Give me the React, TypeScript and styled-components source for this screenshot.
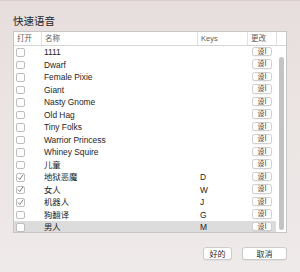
import { FC } from "react";
import styled, { createGlobalStyle } from "styled-components";

type VoiceRow = {
  name: string;
  key?: string;
  checked?: boolean;
  selected?: boolean;
};

const rows: VoiceRow[] = [
  { name: "1111" },
  { name: "Dwarf" },
  { name: "Female Pixie" },
  { name: "Giant" },
  { name: "Nasty Gnome" },
  { name: "Old Hag" },
  { name: "Tiny Folks" },
  { name: "Warrior Princess" },
  { name: "Whiney Squire" },
  { name: "儿童" },
  { name: "地狱恶魔", key: "D", checked: true },
  { name: "女人", key: "W", checked: true },
  { name: "机器人", key: "J", checked: true },
  { name: "狗翻译", key: "G" },
  { name: "男人", key: "M", selected: true },
];

const GlobalStyle = createGlobalStyle`
  html, body {
    margin: 0;
    padding: 0;
  }
  body {
    font-family: "Liberation Sans", "Noto Sans CJK SC", sans-serif;
  }
`;

const Check: FC<{ checked?: boolean }> = ({ checked }) => (
  <CheckBox>
    {checked && (
      <svg width="7" height="7" viewBox="0 0 7 7">
        <polyline
          points="1.2,3.8 2.8,5.5 5.9,1"
          fill="none"
          stroke="#707070"
          strokeWidth="0.9"
          strokeLinecap="round"
          strokeLinejoin="round"
        />
      </svg>
    )}
  </CheckBox>
);

const App: FC = () => {
  return (
    <Window>
      <GlobalStyle />
      <Title>快速语音</Title>
      <Table>
        <Header>
          <HeadCell>打开</HeadCell>
          <HeadCell $divider>名称</HeadCell>
          <HeadCell $divider>Keys</HeadCell>
          <HeadCell $divider>更改</HeadCell>
          <HeadCell $divider />
        </Header>
        <Body>
          <Rows>
            {rows.map((r) => (
              <Row key={r.name} $selected={r.selected}>
                <CheckCell>
                  <Check checked={r.checked} />
                </CheckCell>
                <NameCell>{r.name}</NameCell>
                <KeyCell>{r.key}</KeyCell>
                <EditCell>
                  <SmallButton>设I</SmallButton>
                </EditCell>
              </Row>
            ))}
          </Rows>
          <ScrollTrack>
            <Thumb />
          </ScrollTrack>
        </Body>
      </Table>
      <Footer>
        <PushButton $width={29}>好的</PushButton>
        <PushButton $width={45}>取消</PushButton>
      </Footer>
    </Window>
  );
};

export default App;

const Window = styled.div`
  width: 300px;
  height: 272px;
  box-sizing: border-box;
  padding: 13px 13px 0 13px;
  background: linear-gradient(180deg, #e7dddd 0%, #ebe5e4 45%, #eeeae9 100%);
  border-top: 1px solid #d9cfcf;
  overflow: hidden;
`;

const Title = styled.div`
  font-family: "Noto Sans CJK SC", sans-serif;
  font-size: 10.5px;
  line-height: 13px;
  color: #262626;
  height: 13px;
  margin-bottom: 4px;
`;

const Table = styled.div`
  width: 274px;
  height: 202px;
  box-sizing: border-box;
  border: 1px solid #c6c6c6;
  background: #fff;
  display: flex;
  flex-direction: column;
`;

const Header = styled.div`
  display: grid;
  grid-template-columns: 27px 156px 50px 29px 10px;
  height: 13px;
  border-bottom: 1px solid #d6d6d6;
  flex: none;
`;

const HeadCell = styled.div<{ $divider?: boolean }>`
  font-size: 7.5px;
  line-height: 13px;
  color: #5c5c5c;
  padding-left: 3px;
  white-space: nowrap;
  border-left: ${(p) => (p.$divider ? "1px solid #e1e1e1" : "none")};
  font-family: "Liberation Sans", "Noto Sans CJK SC", sans-serif;
`;

const Body = styled.div`
  flex: 1;
  display: flex;
  overflow: hidden;
`;

const Rows = styled.div`
  width: 262px;
  display: flex;
  flex-direction: column;
`;

const Row = styled.div<{ $selected?: boolean }>`
  display: grid;
  grid-template-columns: 27px 156px 50px 29px;
  height: 12.5px;
  flex: none;
  background: ${(p) => (p.$selected ? "#dcdcdc" : "transparent")};
`;

const CheckCell = styled.div`
  display: flex;
  align-items: center;
  padding-left: 2px;
`;

const CheckBox = styled.div`
  width: 9px;
  height: 8.5px;
  box-sizing: border-box;
  border: 1px solid #bdbdbd;
  border-radius: 2px;
  background: #fff;
  display: flex;
  align-items: center;
  justify-content: center;
`;

const NameCell = styled.div`
  font-size: 8.4px;
  line-height: 12.5px;
  color: #1e1e1e;
  padding-left: 3px;
  white-space: nowrap;
`;

const KeyCell = styled(NameCell)`
  padding-left: 3px;
`;

const EditCell = styled.div`
  padding: 0.5px 0 0 5px;
`;

const SmallButton = styled.div`
  width: 20px;
  height: 9.5px;
  box-sizing: border-box;
  border: 1px solid #cfcfcf;
  border-radius: 2.5px;
  background: #fff;
  box-shadow: 0 0.5px 0 rgba(0, 0, 0, 0.08);
  font-family: "Noto Sans CJK SC", sans-serif;
  font-size: 7px;
  line-height: 7.5px;
  color: #3a3a3a;
  text-align: center;
  overflow: hidden;
`;

const ScrollTrack = styled.div`
  width: 10px;
  flex: none;
  padding: 11px 0 2px 3px;
  box-sizing: border-box;
  display: flex;
`;

const Thumb = styled.div`
  width: 5px;
  flex: none;
  border-radius: 3px;
  background: #c3c3c3;
`;

const Footer = styled.div`
  display: flex;
  justify-content: flex-end;
  gap: 10px;
  margin-top: 14px;
`;

const PushButton = styled.div<{ $width: number }>`
  width: ${(p) => p.$width}px;
  height: 13px;
  box-sizing: border-box;
  border: 1px solid #cccccc;
  border-radius: 3px;
  background: #fff;
  box-shadow: 0 0.5px 0.5px rgba(0, 0, 0, 0.1);
  font-family: "Noto Sans CJK SC", sans-serif;
  font-size: 8px;
  line-height: 11px;
  color: #2a2a2a;
  text-align: center;
`;
